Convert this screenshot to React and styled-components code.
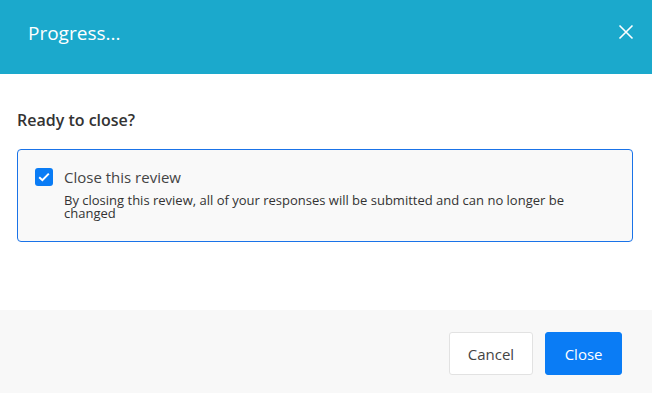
import React from 'react';
import styled, { createGlobalStyle } from 'styled-components';

const GlobalStyle = createGlobalStyle`
  html, body {
    margin: 0;
    padding: 0;
    background: #fff;
  }
  body {
    font-family: 'Open Sans', 'Noto Sans', sans-serif;
    color: #333;
  }
  * {
    box-sizing: border-box;
  }
`;

const App = () => {
  return (
    <>
      <GlobalStyle />
      <Modal>
        <Header>
          <Title>Progress...</Title>
          <CloseIcon aria-label="Close">
            <svg width="16" height="16" viewBox="0 0 16 16">
              <path d="M1.5 1.5 L14.5 14.5 M14.5 1.5 L1.5 14.5" stroke="#fff" strokeWidth="1.6" fill="none" />
            </svg>
          </CloseIcon>
        </Header>
        <Body>
          <Question>Ready to close?</Question>
          <OptionBox>
            <Check>
              <svg width="12" height="10" viewBox="0 0 12 10">
                <path d="M1.2 5.2 L4.4 8.2 L10.8 1.6" stroke="#fff" strokeWidth="2" fill="none" />
              </svg>
            </Check>
            <OptionText>
              <OptionLabel>Close this review</OptionLabel>
              <OptionHint>
                By closing this review, all of your responses will be submitted and can no longer be changed
              </OptionHint>
            </OptionText>
          </OptionBox>
        </Body>
        <Footer>
          <Button>Cancel</Button>
          <Button primary>Close</Button>
        </Footer>
      </Modal>
    </>
  );
};

export default App;

const Modal = styled.div`
  width: 652px;
  height: 393px;
  display: flex;
  flex-direction: column;
  background: #fff;
`;

const Header = styled.div`
  height: 74px;
  flex-shrink: 0;
  background: #1ba9cc;
  display: flex;
  align-items: center;
  justify-content: space-between;
  padding: 0 18px 0 28px;
`;

const Title = styled.h2`
  margin: 0;
  font-size: 19px;
  font-weight: 400;
  color: #fff;
  position: relative;
  top: -4px;
`;

const CloseIcon = styled.button`
  background: none;
  border: 0;
  padding: 0;
  width: 16px;
  height: 16px;
  display: flex;
  cursor: pointer;
  position: relative;
  top: -5px;
`;

const Body = styled.div`
  flex: 1;
  padding: 34px 19px 0 17px;
`;

const Question = styled.h3`
  margin: 0 0 17px;
  font-size: 16px;
  font-weight: 600;
  line-height: 24px;
  color: #333;
`;

const OptionBox = styled.div`
  border: 1px solid #1a73e8;
  border-radius: 4px;
  background: #f9f9f9;
  height: 93px;
  display: flex;
  align-items: flex-start;
  padding: 17px 17px 0 17px;
  gap: 11px;
`;

const Check = styled.div`
  width: 18px;
  height: 18px;
  flex-shrink: 0;
  margin-top: 1px;
  border-radius: 3px;
  background: #0a7cf5;
  display: flex;
  align-items: center;
  justify-content: center;
`;

const OptionText = styled.div`
  display: flex;
  flex-direction: column;
  padding-right: 14px;
`;

const OptionLabel = styled.div`
  font-size: 15px;
  line-height: 20px;
  color: #444;
`;

const OptionHint = styled.div`
  margin-top: 7px;
  font-size: 13px;
  line-height: 12.5px;
  color: #333;
`;

const Footer = styled.div`
  height: 83px;
  flex-shrink: 0;
  background: #f8f8f8;
  display: flex;
  justify-content: flex-end;
  align-items: flex-start;
  gap: 12px;
  padding: 22px 30px 0 0;
`;

const Button = styled.button`
  height: 43px;
  padding: 0 ${(p) => (p.primary ? '18.5px' : '18px')};
  font-family: 'Open Sans', 'Noto Sans', sans-serif;
  font-size: 15px;
  border-radius: 3px;
  cursor: pointer;
  border: 1px solid ${(p) => (p.primary ? '#0a7cf5' : '#e2e2e2')};
  background: ${(p) => (p.primary ? '#0a7cf5' : '#fff')};
  color: ${(p) => (p.primary ? '#fff' : '#444')};
`;
